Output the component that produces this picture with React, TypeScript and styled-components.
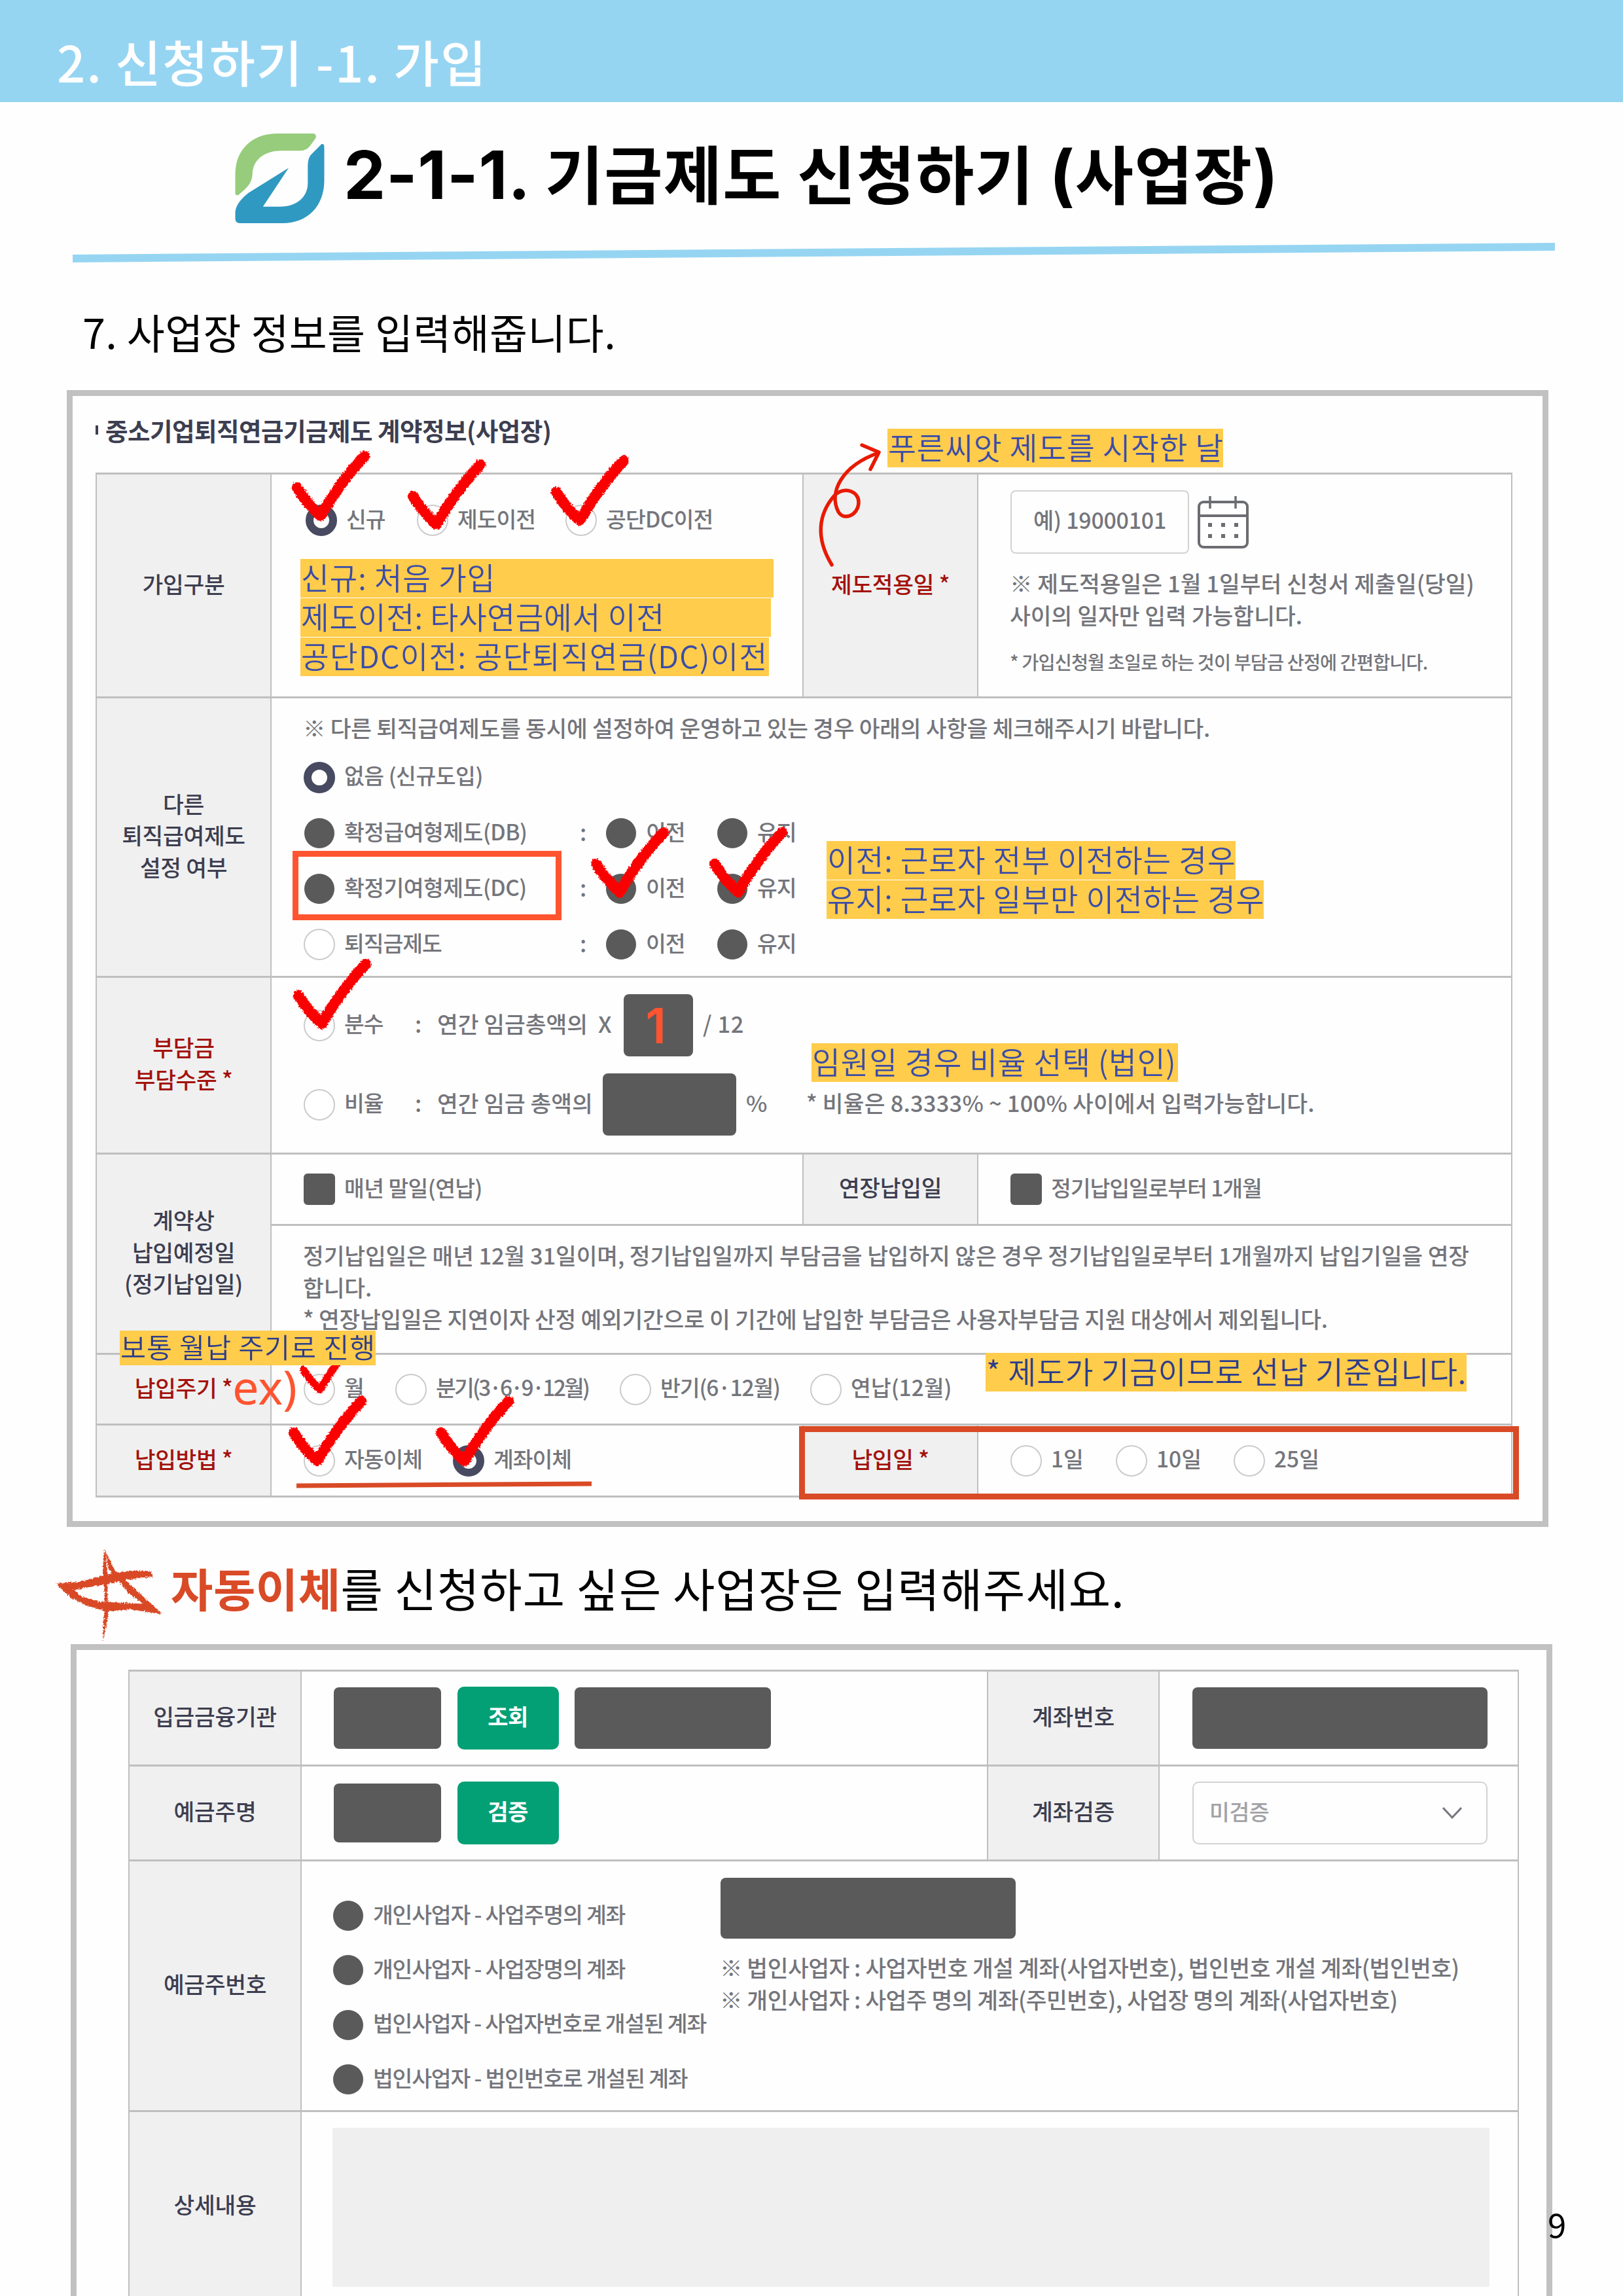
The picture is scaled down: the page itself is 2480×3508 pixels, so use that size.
import React from "react";
import styled, { createGlobalStyle, css } from "styled-components";

const INK = "#3d3e50";
const BODY = "#74757b";
const RULE = "#bfbfbf";
const MASK = "#5a5a5a";
const REQUIRED = "#a3120c";
const ORANGE = "#ff5430";
const BRICK = "#d94a26";

const GlobalStyle = createGlobalStyle`
  * { box-sizing: border-box; }
  body {
    margin: 0;
    background: #fefefe;
    font-family: "Noto Sans CJK KR", "Noto Sans", sans-serif;
  }
`;

const Page = styled.main`
  position: relative;
  width: 2480px;
  height: 3508px;
  overflow: hidden;
  display: flex;
  flex-direction: column;
  background: #fefefe;
`;

const Banner = styled.header`
  height: 156px;
  flex: none;
  display: flex;
  align-items: center;
  padding: 30px 0 0 87px;
  background: #96d5f2;
  color: #fff;
  font-size: 76px;
  line-height: 100px;
  font-weight: 500;
  letter-spacing: 2px;
  white-space: pre;
`;

const TitleRow = styled.div`
  height: 215px;
  flex: none;
  display: flex;
  align-items: center;
  gap: 28px;
  padding: 19px 0 0 359px;
`;

const Title = styled.h1`
  margin: 0;
  font-size: 97px;
  line-height: 120px;
  font-weight: 700;
  letter-spacing: 1.3px;
  color: #000;
  white-space: pre;
  padding-bottom: 17px;
`;

const Latin = styled.span`
  font-family: Inter, sans-serif;
  font-size: 102px;
  letter-spacing: 0.7px;
`;

const Divider = styled.svg`
  flex: none;
  display: block;
  margin-left: 110px;
`;

const StepText = styled.p`
  margin: 0;
  height: 195px;
  flex: none;
  display: flex;
  align-items: center;
  padding: 14px 0 0 126px;
  font-size: 63px;
  letter-spacing: 0.4px;
  color: #000;
  white-space: pre;
`;

const Panel = styled.section<{ $indent: number; $height: number; $pad: string }>`
  flex: none;
  width: 2264px;
  height: ${(p) => p.$height}px;
  margin-left: ${(p) => p.$indent}px;
  padding: ${(p) => p.$pad};
  border: 9px solid #c1c1c1;
`;

const PanelTitle = styled.h2`
  margin: 0;
  height: 117px;
  display: flex;
  align-items: center;
  gap: 11px;
  padding-bottom: 14px;
  color: ${INK};
  font-size: 37.5px;
  font-weight: 700;
  letter-spacing: -0.5px;
  white-space: pre;
  &::before {
    content: "";
    width: 4px;
    height: 14px;
    background: ${INK};
  }
`;

const Table = styled.div<{ $cols: string; $rows: string }>`
  display: grid;
  grid-template-columns: ${(p) => p.$cols};
  grid-template-rows: ${(p) => p.$rows};
  width: max-content;
  border-top: 3px solid ${RULE};
  border-left: 2px solid ${RULE};
`;

const cellBase = css<{ $span?: number; $rowSpan?: number }>`
  grid-column: span ${(p) => p.$span ?? 1};
  grid-row: span ${(p) => p.$rowSpan ?? 1};
  border-right: 2px solid ${RULE};
  border-bottom: 3px solid ${RULE};
  font-size: 34.5px;
  line-height: 48.6px;
  font-weight: 500;
  white-space: pre;
`;

const Th = styled.div<{ $span?: number; $rowSpan?: number; $required?: boolean }>`
  ${cellBase}
  display: flex;
  align-items: center;
  justify-content: center;
  text-align: center;
  padding-bottom: 7px;
  background: #f0f0f0;
  color: ${(p) => (p.$required ? REQUIRED : INK)};
  letter-spacing: -0.3px;
`;

const Td = styled.div<{ $span?: number; $pad?: string; $gap?: number; $middle?: boolean }>`
  ${cellBase}
  display: flex;
  flex-direction: column;
  justify-content: ${(p) => (p.$middle ? "center" : "flex-start")};
  gap: ${(p) => p.$gap ?? 0}px;
  padding: ${(p) => p.$pad ?? "0 0 0 49px"};
  color: ${BODY};
  letter-spacing: -0.28px;
`;

const Line = styled.div<{ $cols: string; $height?: number }>`
  display: grid;
  grid-template-columns: ${(p) => p.$cols};
  align-items: center;
  height: ${(p) => p.$height ?? 48}px;
  flex: none;
`;

const Copy = styled.p<{ $size?: number; $track?: number; $top?: number; $bottom?: number }>`
  margin: ${(p) => p.$top ?? 0}px 0 ${(p) => p.$bottom ?? 0}px -1px;
  transform: translateY(-2px);
  font-size: ${(p) => p.$size ?? 34.5}px;
  letter-spacing: ${(p) => p.$track ?? -0.28}px;
`;

const Txt = styled.span<{ $track?: number }>`
  transform: translateY(-3px);
  letter-spacing: ${(p) => p.$track ?? 0}px;
`;

const OptionBox = styled.label`
  display: flex;
  align-items: center;
  gap: 14px;
  height: 48px;
  font-size: 33.5px;
`;

type Mark = "on" | "off" | "mask" | "square";

const Dot = styled.i<{ $mark: Mark }>`
  flex: none;
  width: 48px;
  height: 48px;
  border-radius: 50%;
  ${(p) => p.$mark === "on" && css`border: 12.5px solid #474a60; background: #fff;`}
  ${(p) => p.$mark === "off" && css`border: 2.5px solid #cbcbcb; background: #fff;`}
  ${(p) => p.$mark === "mask" && css`border: 1px solid #fff; background: ${MASK};`}
  ${(p) => p.$mark === "square" && css`border-radius: 6px; background: ${MASK};`}
`;

const Option = ({ mark, children, track }: { mark: Mark; children: React.ReactNode; track?: number }) => (
  <OptionBox>
    <Dot $mark={mark} />
    <Txt $track={track ?? -1.1}>{children}</Txt>
  </OptionBox>
);

const MaskBox = styled.div<{ $w: number; $h: number }>`
  width: ${(p) => p.$w}px;
  height: ${(p) => p.$h}px;
  border-radius: 8px;
  background: ${MASK};
  display: flex;
  align-items: center;
  justify-content: center;
  color: ${ORANGE};
  font-family: Inter, sans-serif;
  font-size: 74px;
  font-weight: 600;
  line-height: 94px;
  padding: 0 8px 0 0;
`;

const DateRow = styled.div`
  display: flex;
  align-items: center;
  gap: 13px;
  height: 97px;
`;

const DateInput = styled.div`
  width: 273px;
  height: 97px;
  display: flex;
  align-items: center;
  justify-content: center;
  padding-bottom: 6px;
  border: 2px solid #d2d2d2;
  border-radius: 8px;
  font-size: 34px;
`;

const Fields = styled.div`
  display: flex;
  align-items: center;
  gap: 24.5px;
`;

const GreenButton = styled.button`
  width: 155px;
  height: 96px;
  padding: 0 0 7px;
  border: 0;
  border-radius: 10px;
  background: #03a075;
  color: #fff;
  font: 700 34px "Noto Sans CJK KR", sans-serif;
  letter-spacing: -0.5px;
`;

const Select = styled.div`
  width: 451px;
  height: 96px;
  display: flex;
  align-items: center;
  justify-content: space-between;
  padding: 0 37px 0 24px;
  border: 2px solid #d2d2d2;
  border-radius: 10px;
  color: #a2a2a6;
  font-size: 33.5px;
`;

const OwnerGrid = styled.div`
  display: grid;
  grid-template-columns: 593px auto;
`;

const Stack = styled.div<{ $gap: number; $top: number }>`
  display: flex;
  flex-direction: column;
  gap: ${(p) => p.$gap}px;
  padding-top: ${(p) => p.$top}px;
`;

const GrayArea = styled.div`
  width: 1768px;
  height: 243px;
  background: #efefef;
`;

const SecondHeading = styled.p`
  margin: 0;
  height: 179px;
  flex: none;
  display: flex;
  align-items: center;
  padding: 6px 0 0 261px;
  font-size: 70px;
  letter-spacing: 0.95px;
  color: #000;
  white-space: pre;
  b { color: ${BRICK}; font-weight: 700; letter-spacing: 0.5px; }
`;

/* Handwritten annotations laid over the form */
const Overlay = styled.svg`
  position: absolute;
  left: 0;
  top: 0;
  pointer-events: none;
`;

const Note = styled.div<{ $x: number; $y: number; $w: number; $h?: number; $size?: number; $track?: number; $dark?: boolean }>`
  position: absolute;
  left: ${(p) => p.$x}px;
  top: ${(p) => p.$y}px;
  width: ${(p) => p.$w}px;
  height: ${(p) => p.$h ?? 59}px;
  padding-left: 1px;
  background: #ffcc4b;
  color: ${(p) => (p.$dark ? "#2c3c8c" : "#3a4ca8")};
  font-size: ${(p) => p.$size ?? 46.5}px;
  line-height: ${(p) => (p.$h ?? 59) - 6}px;
  font-weight: 350;
  letter-spacing: ${(p) => p.$track ?? 0.8}px;
  white-space: pre;
`;

const Frame = styled.div<{ $x: number; $y: number; $w: number; $h: number; $color: string }>`
  position: absolute;
  left: ${(p) => p.$x}px;
  top: ${(p) => p.$y}px;
  width: ${(p) => p.$w}px;
  height: ${(p) => p.$h}px;
  border: 9px solid ${(p) => p.$color};
`;

const Example = styled.span`
  position: absolute;
  left: 355px;
  top: 2070px;
  font: 400 72px/96px "Noto Sans", sans-serif;
  color: ${ORANGE};
`;

const PageNumber = styled.span`
  position: absolute;
  left: 2365px;
  top: 3360px;
  font-size: 51px;
  line-height: 74px;
  color: #000;
`;

const Logo = () => (
  <svg width="138" height="138" viewBox="0 0 136 137" fill="none">
    <path fill="#96cc7c" d="M0 62C0 24 26 0 64 0H117Q124 0 122 7L114 18Q108 26 99 26H70C42 26 26 42 26 62C25 76 18 82 5 93Q0 95 0 90Z" />
    <path fill="#3099c1" d="M131 16Q135 15 135 21V71C135 110 110 136 72 136H7Q0 136 0 129V119Q1 105 20 90L81 52L42 111H68C94 111 110 96 110 75V49Q110 36 116 31Z" />
  </svg>
);

const Calendar = () => (
  <svg width="78" height="80" viewBox="0 0 78 80" fill="none" stroke="#6c6d73">
    <rect x="2" y="9" width="74" height="69" rx="7" strokeWidth="4" />
    <path d="M2 30H76" strokeWidth="4" />
    <path d="M19 0V19M58 0V19" strokeWidth="3.5" />
    <path d="M16 44h6M36 44h6M56 44h6M16 61h6M36 61h6M56 61h6" strokeWidth="6" />
  </svg>
);

const CheckMark = ({ x, y, scale = 1 }: { x: number; y: number; scale?: number }) => (
  <path
    transform={`translate(${x} ${y}) scale(${scale})`}
    d="M-36 -53Q-20 -27 0 -10Q30 -62 67 -101"
  />
);

const checks: { x: number; y: number; scale?: number }[] = [
  { x: 490, y: 798 },
  { x: 667, y: 811 },
  { x: 886, y: 805 },
  { x: 947, y: 1373 },
  { x: 1128, y: 1373 },
  { x: 492, y: 1574 },
  { x: 489, y: 2130, scale: 0.7 },
  { x: 485, y: 2242 },
  { x: 710, y: 2242 },
];

const Annotations = () => (
  <Overlay width="2480" height="3508" viewBox="0 0 2480 3508" fill="none">
    <defs>
      <filter id="brush" x="0" y="0" width="2480" height="3508" filterUnits="userSpaceOnUse">
        <feTurbulence type="fractalNoise" baseFrequency="0.4" numOctaves="2" seed="4" result="noise" />
        <feDisplacementMap in="SourceGraphic" in2="noise" xChannelSelector="R" yChannelSelector="G" scale="6" />
      </filter>
    </defs>
    <g stroke="#fb0400" strokeWidth="16.5" strokeLinecap="round" strokeLinejoin="round" filter="url(#brush)">
      {checks.map((c) => (
        <CheckMark key={`${c.x}-${c.y}`} {...c} />
      ))}
    </g>
    <g stroke="#e81a02" strokeWidth="5.5" strokeLinecap="round" strokeLinejoin="round">
      <path d="M1271 863C1246 822 1250 785 1276 756C1292 742 1313 752 1312 768C1311 788 1289 796 1281 782C1266 752 1286 712 1342 692" />
      <path d="M1317 680L1343 691L1330 717" />
    </g>
    <path d="M453 2270L904 2267" stroke={BRICK} strokeWidth="7" />
    <g fill={BRICK} filter="url(#brush)">
      <path d="M160 2365L164 2400L165 2470L157 2510L160 2440L157 2400Z" />
      <path d="M160 2368L175 2398L204 2426L247 2465L236 2462L196 2434L178 2410L166 2398Z" />
      <path d="M86 2419L120 2417L160 2407Q196 2397 231 2401L234 2409Q200 2411 166 2420L112 2429Z" />
      <path d="M86 2420L108 2424L122 2438L150 2447L228 2451L247 2466L200 2459L165 2462L136 2455L108 2441Z" />
    </g>
  </Overlay>
);

export default function App() {
  return (
    <Page>
      <GlobalStyle />
      <Banner>2. 신청하기 -1. 가입</Banner>
      <TitleRow>
        <Logo />
        <Title>
          <Latin>2-1-1. </Latin>기금제도 신청하기 <Latin>(</Latin>사업장<Latin>)</Latin>
        </Title>
      </TitleRow>
      <Divider width="2266" height="30" viewBox="0 0 2266 30">
        <path d="M1 18L2266 0V12L1 30Z" fill="#96d5f2" />
      </Divider>
      <StepText>7. 사업장 정보를 입력해줍니다.</StepText>

      <Panel $indent={102} $height={1737} $pad="0 0 0 35px">
        <PanelTitle>중소기업퇴직연금기금제도 계약정보(사업장)</PanelTitle>
        <Table $cols="267px 813px 267px 816px" $rows="342px 427px 270px 109px 197px 108px 110px">
          <Th>가입구분</Th>
          <Td $pad="46px 0 0 52px">
            <Line $cols="170px 227px auto">
              <Option mark="on">신규</Option>
              <Option mark="off">제도이전</Option>
              <Option mark="off" track={-0.8}>공단DC이전</Option>
            </Line>
          </Td>
          <Th $required>제도적용일 *</Th>
          <Td $pad="24px 0 0 49px">
            <DateRow>
              <DateInput>예) 19000101</DateInput>
              <Calendar />
            </DateRow>
            <Copy $top={22} $track={0.05}>
              {"※ 제도적용일은 1월 1일부터 신청서 제출일(당일)\n사이의 일자만 입력 가능합니다."}
            </Copy>
            <Copy $top={24} $size={28.3} $track={-0.85}>* 가입신청월 초일로 하는 것이 부담금 산정에 간편합니다.</Copy>
          </Td>

          <Th>{"다른\n퇴직급여제도\n설정 여부"}</Th>
          <Td $span={3} $pad="22px 0 0 49px" $gap={37}>
            <Copy $track={-0.26} $bottom={-11}>※ 다른 퇴직급여제도를 동시에 설정하여 운영하고 있는 경우 아래의 사항을 체크해주시기 바랍니다.</Copy>
            <Line $cols="auto">
              <Option mark="on" track={-0.5}>없음 (신규도입)</Option>
            </Line>
            {[
              { name: "확정급여형제도(DB)", mark: "mask" as Mark, track: -0.55 },
              { name: "확정기여형제도(DC)", mark: "mask" as Mark, track: -0.55 },
              { name: "퇴직금제도", mark: "off" as Mark, track: -1.1 },
            ].map((row) => (
              <Line key={row.name} $cols="422px 39px 170px auto">
                <Option mark={row.mark} track={row.track}>{row.name}</Option>
                <Txt>:</Txt>
                <Option mark="mask">이전</Option>
                <Option mark="mask">유지</Option>
              </Line>
            ))}
          </Td>

          <Th $required>{"부담금\n부담수준 *"}</Th>
          <Td $span={3} $pad="25px 0 0 49px" $gap={26}>
            <Line $cols="170px 34px 246px 39px 121px auto" $height={95}>
              <Option mark="off">분수</Option>
              <Txt>:</Txt>
              <Txt>연간 임금총액의</Txt>
              <Txt>X</Txt>
              <MaskBox $w={106} $h={95}>1</MaskBox>
              <Txt $track={0.6}>/ 12</Txt>
            </Line>
            <Line $cols="170px 34px 253px 219px 92px auto" $height={95}>
              <Option mark="off">비율</Option>
              <Txt>:</Txt>
              <Txt>연간 임금 총액의</Txt>
              <MaskBox $w={204} $h={95} />
              <Txt>%</Txt>
              <Txt $track={0.2}>* 비율은 8.3333% ~ 100% 사이에서 입력가능합니다.</Txt>
            </Line>
          </Td>

          <Th $rowSpan={2}>{"계약상\n납입예정일\n(정기납입일)"}</Th>
          <Td $middle>
            <Option mark="square" track={-0.6}>매년 말일(연납)</Option>
          </Td>
          <Th>연장납입일</Th>
          <Td $middle>
            <Option mark="square">정기납입일로부터 1개월</Option>
          </Td>
          <Td $span={3} $pad="22px 0 0 49px">
            <Copy $track={-0.1}>
              {"정기납입일은 매년 12월 31일이며, 정기납입일까지 부담금을 납입하지 않은 경우 정기납입일로부터 1개월까지 납입기일을 연장\n합니다."}
            </Copy>
            <Copy $track={-0.24}>* 연장납입일은 지연이자 산정 예외기간으로 이 기간에 납입한 부담금은 사용자부담금 지원 대상에서 제외됩니다.</Copy>
          </Td>

          <Th $required>납입주기 *</Th>
          <Td $span={3} $middle>
            <Line $cols="140px 343px 291px auto">
              <Option mark="off">월</Option>
              <Option mark="off" track={-2.8}>분기(3·6·9·12월)</Option>
              <Option mark="off">반기(6·12월)</Option>
              <Option mark="off" track={0}>연납(12월)</Option>
            </Line>
          </Td>

          <Th $required>납입방법 *</Th>
          <Td $middle>
            <Line $cols="228px auto">
              <Option mark="off">자동이체</Option>
              <Option mark="on">계좌이체</Option>
            </Line>
          </Td>
          <Th $required>납입일 *</Th>
          <Td $middle>
            <Line $cols="161px 180px auto">
              <Option mark="off" track={0}>1일</Option>
              <Option mark="off" track={0}>10일</Option>
              <Option mark="off" track={0}>25일</Option>
            </Line>
          </Td>
        </Table>
      </Panel>

      <SecondHeading><b>자동이체</b>를 신청하고 싶은 사업장은 입력해주세요.</SecondHeading>

      <Panel $indent={108} $height={1100} $pad="30px 0 0 79px">
        <Table $cols="263px 1049px 262px 549px" $rows="145px 145px 383px 290px">
          <Th>입금금융기관</Th>
          <Td $middle>
            <Fields>
              <MaskBox $w={164} $h={94} />
              <GreenButton>조회</GreenButton>
              <MaskBox $w={300} $h={94} />
            </Fields>
          </Td>
          <Th>계좌번호</Th>
          <Td $middle $pad="0 0 0 50px">
            <MaskBox $w={451} $h={94} />
          </Td>

          <Th>예금주명</Th>
          <Td $middle>
            <Fields>
              <MaskBox $w={164} $h={90} />
              <GreenButton>검증</GreenButton>
            </Fields>
          </Td>
          <Th>계좌검증</Th>
          <Td $middle $pad="0 0 0 50px">
            <Select>
              <Txt $track={-0.4}>미검증</Txt>
              <svg width="30" height="18" viewBox="0 0 30 18" fill="none" stroke="#77787e" strokeWidth="3">
                <path d="M1 1L15 16L29 1" />
              </svg>
            </Select>
          </Td>

          <Th>예금주번호</Th>
          <Td $span={3} $pad="0 0 0 47px">
            <OwnerGrid>
              <Stack $gap={35.4} $top={59}>
                <Option mark="mask" track={-1.2}>개인사업자 - 사업주명의 계좌</Option>
                <Option mark="mask" track={-1.2}>개인사업자 - 사업장명의 계좌</Option>
                <Option mark="mask" track={-1.25}>법인사업자 - 사업자번호로 개설된 계좌</Option>
                <Option mark="mask" track={-1.2}>법인사업자 - 법인번호로 개설된 계좌</Option>
              </Stack>
              <Stack $gap={21} $top={25}>
                <MaskBox $w={451} $h={93} />
                <Copy $track={-0.45}>
                  {"※ 법인사업자 : 사업자번호 개설 계좌(사업자번호), 법인번호 개설 계좌(법인번호)\n※ 개인사업자 : 사업주 명의 계좌(주민번호), 사업장 명의 계좌(사업자번호)"}
                </Copy>
              </Stack>
            </OwnerGrid>
          </Td>

          <Th>상세내용</Th>
          <Td $span={3} $pad="24px 0 0 47px">
            <GrayArea />
          </Td>
        </Table>
      </Panel>

      <Annotations />
      <Frame $x={447} $y={1300} $w={411} $h={106} $color={ORANGE} />
      <Frame $x={1221} $y={2179} $w={1100} $h={112} $color={BRICK} />
      <Note $x={459} $y={854} $w={723} $track={0.8}>신규: 처음 가입</Note>
      <Note $x={459} $y={914} $w={719} $track={0.6}>제도이전: 타사연금에서 이전</Note>
      <Note $x={459} $y={974} $w={716} $track={1.2}>공단DC이전: 공단퇴직연금(DC)이전</Note>
      <Note $x={1356} $y={655} $w={513}>푸른씨앗 제도를 시작한 날</Note>
      <Note $x={1263} $y={1285} $w={625}>이전: 근로자 전부 이전하는 경우</Note>
      <Note $x={1263} $y={1345} $w={668}>유지: 근로자 일부만 이전하는 경우</Note>
      <Note $x={1240} $y={1594} $w={560}>임원일 경우 비율 선택 (법인)</Note>
      <Note $x={183} $y={2033} $w={391} $h={53} $size={42.5} $dark>보통 월납 주기로 진행</Note>
      <Note $x={1506} $y={2067} $w={735} $dark>* 제도가 기금이므로 선납 기준입니다.</Note>
      <Example>ex)</Example>
      <PageNumber>9</PageNumber>
    </Page>
  );
}
